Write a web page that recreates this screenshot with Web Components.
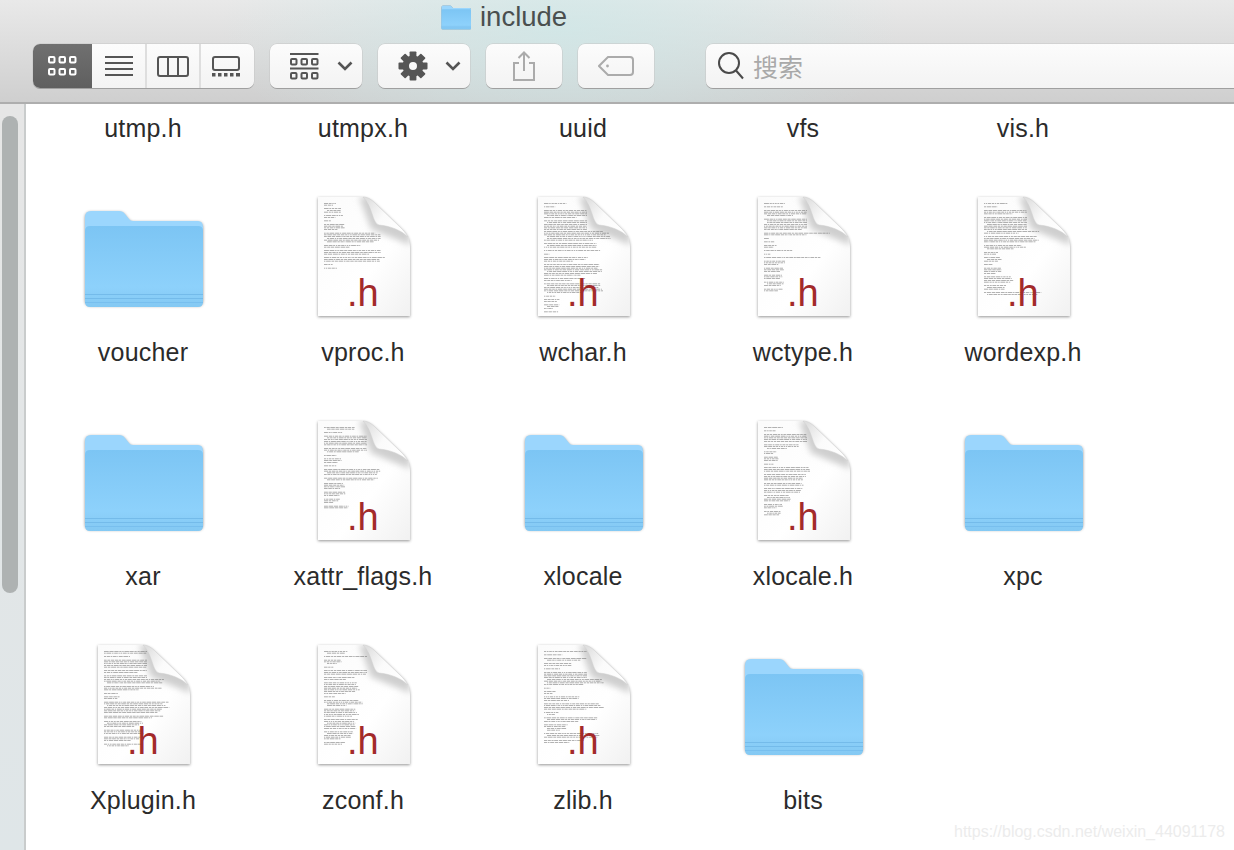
<!DOCTYPE html>
<html lang="en">
<head>
<meta charset="utf-8">
<title>include</title>
<style>
  html, body { margin: 0; height: 100%; overflow: hidden; background: #fff; }
  body { font-family: "Liberation Sans", "Noto Sans CJK SC", sans-serif; }
</style>
</head>
<body>
<finder-window>
  <finder-toolbar slot="toolbar"></finder-toolbar>
  <file-item>utmp.h</file-item>
  <file-item>utmpx.h</file-item>
  <file-item>uuid</file-item>
  <file-item>vfs</file-item>
  <file-item>vis.h</file-item>

  <file-item kind="folder">voucher</file-item>
  <file-item kind="file" doc="vproc">vproc.h</file-item>
  <file-item kind="file" doc="wchar">wchar.h</file-item>
  <file-item kind="file" doc="wctype">wctype.h</file-item>
  <file-item kind="file" doc="wordexp">wordexp.h</file-item>

  <file-item kind="folder">xar</file-item>
  <file-item kind="file" doc="xattr">xattr_flags.h</file-item>
  <file-item kind="folder">xlocale</file-item>
  <file-item kind="file" doc="xlocale">xlocale.h</file-item>
  <file-item kind="folder">xpc</file-item>

  <file-item kind="file" doc="xplugin">Xplugin.h</file-item>
  <file-item kind="file" doc="zconf">zconf.h</file-item>
  <file-item kind="file" doc="zlib">zlib.h</file-item>
  <file-item kind="folder">bits</file-item>
</finder-window>

<script>
const make = (html) => {
  const t = document.createElement('template');
  t.innerHTML = html;
  return t;
};

const folderSvg = (size) => `
  <svg width="${size}" height="${size}" viewBox="0 0 128 128" style="display:block;overflow:visible">
    <defs>
      <linearGradient id="front" x1="0" y1="0" x2="0" y2="1">
        <stop offset="0" stop-color="#7cc5f4"/>
        <stop offset="0.75" stop-color="#8dd1fb"/>
        <stop offset="1" stop-color="#84c9f3"/>
      </linearGradient>
    </defs>
    <path d="M6 24q0-6 6-6h28q4 0 6 3l4 5q1 2 4 2h65q5 0 5 6v72q0 6-5 6H12q-6 0-6-6z" fill="#9bd6fd"
      style="filter:drop-shadow(0 1.5px 1.5px rgba(0,0,0,.45))"/>
    <path d="M6 38q0-5 5-5h108q5 0 5 5v71q0 5-5 5H11q-5 0-5-5z" fill="url(#front)"/>
    <rect x="6" y="101" width="118" height="1" fill="#74bbea"/>
    <rect x="6" y="105" width="118" height="1" fill="#74bbea"/>
    <rect x="6" y="109" width="118" height="1" fill="#78bfee"/>
  </svg>`;

customElements.define('folder-icon', class extends HTMLElement {
  connectedCallback() {
    const size = this.getAttribute('size') || 128;
    this.attachShadow({ mode: 'open' }).innerHTML = `
      <style>:host { display: block; line-height: 0; }</style>${folderSvg(size)}`;
  }
});

// the blurry preview text of a header file, as [line count, width] blocks
const docs = {
  vproc: [[2, 14], [3, 18], [2, 20], [1, 10], [4, 22], [6, 60], [2, 38], [3, 62], [3, 64], [1, 10], [1, 16]],
  wchar: [[1, 30], [1, 20], [5, 52], [12, 68], [3, 60], [1, 76], [1, 6], [3, 44], [7, 60], [2, 46], [6, 64], [1, 14], [2, 16], [3, 16], [3, 16], [2, 34]],
  wctype: [[1, 30], [1, 20], [4, 52], [7, 64], [2, 74], [1, 8], [1, 12], [2, 14], [1, 44], [1, 8], [1, 60], [3, 22], [3, 20], [3, 20], [3, 20], [2, 20]],
  wordexp: [[1, 28], [1, 20], [3, 50], [10, 60], [4, 56], [3, 44], [2, 14], [3, 18], [1, 12], [4, 18], [4, 30], [3, 24], [2, 60]],
  xattr: [[2, 34], [1, 22], [6, 68], [3, 60], [1, 16], [3, 18], [1, 14], [4, 62], [2, 60], [4, 22], [3, 24], [3, 16], [2, 26]],
  xlocale: [[1, 24], [1, 14], [5, 66], [3, 40], [2, 14], [3, 16], [1, 12], [3, 50], [4, 42], [2, 44], [3, 40], [4, 28], [3, 20], [3, 18]],
  xplugin: [[2, 50], [1, 38], [5, 66], [2, 54], [5, 62], [3, 58], [1, 16], [2, 18], [7, 66], [2, 60], [4, 40], [3, 42], [3, 40], [2, 40]],
  zconf: [[2, 26], [1, 66], [3, 18], [1, 14], [3, 60], [2, 36], [7, 36], [1, 12], [4, 40], [5, 36], [6, 34], [5, 30], [2, 22]],
  zlib: [[1, 68], [1, 30], [2, 60], [2, 30], [1, 18], [8, 64], [1, 10], [2, 12], [3, 40], [4, 62], [2, 16], [3, 60], [4, 24], [3, 62], [2, 40]]
};

const previewLines = (name) => {
  let seed = name.length * 97 + name.charCodeAt(1);
  const rnd = () => {
    seed = (seed * 9301 + 49297) % 233280;
    return seed / 233280;
  };
  let y = 10;
  let out = '';
  for (const [count, width] of docs[name]) {
    for (let i = 0; i < count && y < 120; i++) {
      let x = 25 + (i > 0 && rnd() < 0.15 ? 3 : 0);
      const limit = y < 38 ? 68 : 104;
      const end = Math.min(25 + width * (i === count - 1 ? 0.55 + rnd() * 0.4 : 0.85 + rnd() * 0.15), limit);
      while (x < end) {
        const w = Math.min(1 + rnd() * 4, end - x);
        out += `<rect x="${x.toFixed(1)}" y="${y.toFixed(1)}" width="${w.toFixed(1)}" height="0.7"/>`;
        x += w + 0.7;
      }
      y += 1.75;
    }
    y += 1.75;
  }
  return out;
};

customElements.define('doc-icon', class extends HTMLElement {
  connectedCallback() {
    this.attachShadow({ mode: 'open' }).innerHTML = `
      <style>
        :host { display: block; line-height: 0; }
        text { font: 38px "Liberation Sans", sans-serif; fill: #a32a2a; }
      </style>
      <svg width="128" height="128" viewBox="0 0 128 128" style="display:block;overflow:visible">
        <defs>
          <linearGradient id="page" x1="0" y1="0" x2="1" y2="1">
            <stop offset="0" stop-color="#fbfbfb"/>
            <stop offset="0.6" stop-color="#ffffff"/>
            <stop offset="1" stop-color="#f1f1f1"/>
          </linearGradient>
          <linearGradient id="flap" x1="0" y1="0.2" x2="1" y2="0.8">
            <stop offset="0" stop-color="#dfdfdf"/>
            <stop offset="0.45" stop-color="#fbfbfb"/>
            <stop offset="1" stop-color="#ffffff"/>
          </linearGradient>
          <filter id="soft" x="-5%" y="-5%" width="110%" height="110%"><feGaussianBlur stdDeviation="0.25"/></filter>
          <filter id="shade" x="-30%" y="-30%" width="160%" height="160%"><feGaussianBlur stdDeviation="3"/></filter>
          <clipPath id="sheet"><path d="M19 4H63C69 4 73 7 77 11L101 34C107 39 111 45 111 54V123H19z"/></clipPath>
        </defs>
        <path d="M19 4H63C69 4 73 7 77 11L101 34C107 39 111 45 111 54V123H19z" fill="url(#page)"
          style="filter:drop-shadow(0 1px 1.5px rgba(0,0,0,.42))"/>
        <g clip-path="url(#sheet)">
          <path d="M60 4L72 36L111 52V34L78 4z" fill="#cfcfcf" filter="url(#shade)"/>
        </g>
        <g fill="#666" opacity="0.72" filter="url(#soft)">${previewLines(this.getAttribute('doc'))}</g>
        <path d="M64 4C69 4 73 7 77 11L101 34C104 37 107 40 109 44C102 37 91 33 80 32C73 30 74 14 64 4z"
          fill="url(#flap)" stroke="#cfcfcf" stroke-width="0.5"/>
        <text x="48" y="113">.h</text>
      </svg>`;
  }
});

const fileTemplate = make(`
  <style>
    :host {
      display: flex;
      flex-direction: column;
      align-items: center;
      padding-top: 25px;
      box-sizing: border-box;
      height: 224px;
    }
    #icon { height: 128px; }
    .label {
      margin-top: 16px;
      line-height: 30px;
      font-size: 25px;
      letter-spacing: 0.2px;
      color: #2b2b2b;
      white-space: nowrap;
    }
  </style>
  <div id="icon"></div>
  <div class="label"><slot></slot></div>
`);

customElements.define('file-item', class extends HTMLElement {
  connectedCallback() {
    const root = this.attachShadow({ mode: 'open' });
    root.appendChild(fileTemplate.content.cloneNode(true));
    const kind = this.getAttribute('kind');
    // the top row is scrolled away, only its labels still show
    if (!kind) return;
    const icon = document.createElement(kind === 'folder' ? 'folder-icon' : 'doc-icon');
    if (this.hasAttribute('doc')) icon.setAttribute('doc', this.getAttribute('doc'));
    root.getElementById('icon').appendChild(icon);
  }
});

const chevron = `<svg width="16" height="10" viewBox="0 0 16 10"><path d="M1.5 1.5L8 8l6.5-6.5" fill="none" stroke="#555" stroke-width="2.6"/></svg>`;
const squares = (color, y) => [0, 10.5, 21].map((x) =>
  `<rect x="${x + 1}" y="${y + 1}" width="5.5" height="5.5" rx="1" fill="none" stroke="${color}" stroke-width="2"/>`).join('');
const gearTeeth = [0, 45, 90, 135, 180, 225, 270, 315].map((a) =>
  `<rect x="-3.4" y="-14.5" width="6.8" height="7" rx="0.8" transform="rotate(${a})"/>`).join('');

const toolbarTemplate = make(`
  <style>
    :host {
      display: block;
      height: 104px;
      box-sizing: border-box;
      border-bottom: 2px solid #aeaeae;
      background:
        radial-gradient(ellipse 340px 150px at 560px 30px, rgba(205, 232, 232, 0.75), rgba(205, 232, 232, 0)),
        linear-gradient(#e9e9e9, #cfcfcf);
    }
    .title {
      display: flex;
      align-items: center;
      height: 33px;
      padding-left: 440px;
      gap: 8px;
      font-size: 27.5px;
      color: #4a4f4f;
    }
    .tools {
      display: flex;
      gap: 16px;
      margin-top: 11px;
      padding-left: 33px;
    }
    .btn, .seg {
      display: flex;
      align-items: center;
      height: 44px;
      border-radius: 7px;
      background: linear-gradient(#fcfcfc, #f3f3f3);
      box-shadow: 0 1px 0 #9f9f9f, 0 0 0 0.5px #c6c6c6;
    }
    .seg { width: 221px; overflow: hidden; }
    .seg > div {
      display: flex;
      align-items: center;
      justify-content: center;
      height: 100%;
      box-sizing: border-box;
    }
    .seg > div + div:not(:nth-child(2)) { border-left: 2px solid #dedede; }
    .active { background: linear-gradient(#707070, #5f5f5f); }
    .menu { width: 92px; justify-content: flex-start; }
    .plain { justify-content: center; }
    .search {
      flex: 1;
      margin-left: 36px;
      margin-right: -10px;
      padding-left: 12px;
      gap: 9px;
      border-radius: 7px 0 0 7px;
      font-size: 25px;
      color: #a9a9a9;
      font-family: "Noto Sans CJK SC", "Liberation Sans", sans-serif;
    }
    svg { display: block; }
  </style>
  <div class="title"><folder-icon size="32"></folder-icon><span>include</span></div>
  <div class="tools">
    <div class="seg">
      <div class="active" style="width:59px">
        <svg width="29" height="21" viewBox="0 0 29 21">${squares('#fff', 0)}${squares('#fff', 12)}</svg>
      </div>
      <div style="width:53px">
        <svg width="28" height="20" viewBox="0 0 28 20" fill="#555"><rect y="0" width="28" height="2"/><rect y="6" width="28" height="2"/><rect y="12" width="28" height="2"/><rect y="18" width="28" height="2"/></svg>
      </div>
      <div style="width:54px">
        <svg width="32" height="21" viewBox="0 0 32 21" fill="none" stroke="#555" stroke-width="2"><rect x="1" y="1" width="30" height="19" rx="2"/><path d="M11 1v19M21 1v19"/></svg>
      </div>
      <div style="width:55px;padding-right:3px">
        <svg width="28" height="21" viewBox="0 0 28 21"><rect x="1" y="1" width="26" height="13" rx="2" fill="none" stroke="#555" stroke-width="2"/><g fill="#555"><rect x="0" y="17" width="3.5" height="3.5"/><rect x="6" y="17" width="3.5" height="3.5"/><rect x="12" y="17" width="3.5" height="3.5"/><rect x="18" y="17" width="3.5" height="3.5"/><rect x="24" y="17" width="4" height="3.5"/></g></svg>
      </div>
    </div>
    <div class="btn menu">
      <svg style="margin-left:20px" width="29" height="27" viewBox="0 0 29 27"><rect x="0" width="28.5" height="2" fill="#555"/>${squares('#555', 5)}<rect x="0" y="14.5" width="28.5" height="2" fill="#555"/>${squares('#555', 19)}</svg>
      <span style="margin-left:18px;line-height:0">${chevron}</span>
    </div>
    <div class="btn menu">
      <svg style="margin-left:20px" width="30" height="30" viewBox="-15 -15 30 30" fill="#555">${gearTeeth}<path fill-rule="evenodd" d="M0-10.5a10.5 10.5 0 1 0 0 21a10.5 10.5 0 1 0 0-21zM0-4a4 4 0 1 1 0 8a4 4 0 1 1 0-8z"/></svg>
      <span style="margin-left:17px;line-height:0">${chevron}</span>
    </div>
    <div class="btn plain" style="width:76px">
      <svg width="24" height="30" viewBox="0 0 24 30" fill="none" stroke="#ababab" stroke-width="2"><path d="M7 12H2v17h20V12h-5"/><path d="M12 20V2M6.5 7L12 1.5 17.5 7"/></svg>
    </div>
    <div class="btn plain" style="width:76px">
      <svg width="36" height="20" viewBox="0 0 36 20" fill="none" stroke="#ababab" stroke-width="2"><path d="M10 1h22a3 3 0 0 1 3 3v12a3 3 0 0 1-3 3H10L1 10z"/><circle cx="9.5" cy="10" r="1.4" fill="#ababab" stroke="none"/></svg>
    </div>
    <div class="btn search">
      <svg width="26" height="28" viewBox="0 0 26 28" fill="none" stroke="#4a4a4a" stroke-width="2"><circle cx="11" cy="11" r="10"/><path d="M18 18.5l7 8"/></svg>
      <span>搜索</span>
    </div>
  </div>
`);

customElements.define('finder-toolbar', class extends HTMLElement {
  constructor() {
    super();
    this.attachShadow({ mode: 'open' }).appendChild(toolbarTemplate.content.cloneNode(true));
  }
});

const windowTemplate = make(`
  <style>
    :host {
      display: flex;
      flex-direction: column;
      height: 850px;
      position: relative;
      overflow: hidden;
    }
    .body { flex: 1; display: flex; min-height: 0; }
    .track {
      flex: none;
      width: 26px;
      padding: 12px 6px 0 2px;
      box-sizing: border-box;
      border-right: 2px solid #c9cccc;
      background: linear-gradient(#e6e6e6, #dfe6e8);
    }
    .thumb { height: 477px; border-radius: 8px; background: #aeb2b2; }
    .scroll { flex: 1; overflow: hidden; }
    .grid {
      display: grid;
      grid-template-columns: repeat(5, 220px);
      grid-auto-rows: 224px;
      margin: -160px 0 0 7px;
    }
    .mark {
      position: absolute;
      right: 9px;
      bottom: 9px;
      font-size: 16px;
      line-height: 18px;
      color: #ececec;
    }
  </style>
  <slot name="toolbar"></slot>
  <div class="body">
    <div class="track"><div class="thumb"></div></div>
    <div class="scroll"><div class="grid"><slot></slot></div></div>
  </div>
  <div class="mark">https://blog.csdn.net/weixin_44091178</div>
`);

customElements.define('finder-window', class extends HTMLElement {
  constructor() {
    super();
    this.attachShadow({ mode: 'open' }).appendChild(windowTemplate.content.cloneNode(true));
  }
});
</script>
</body>
</html>
